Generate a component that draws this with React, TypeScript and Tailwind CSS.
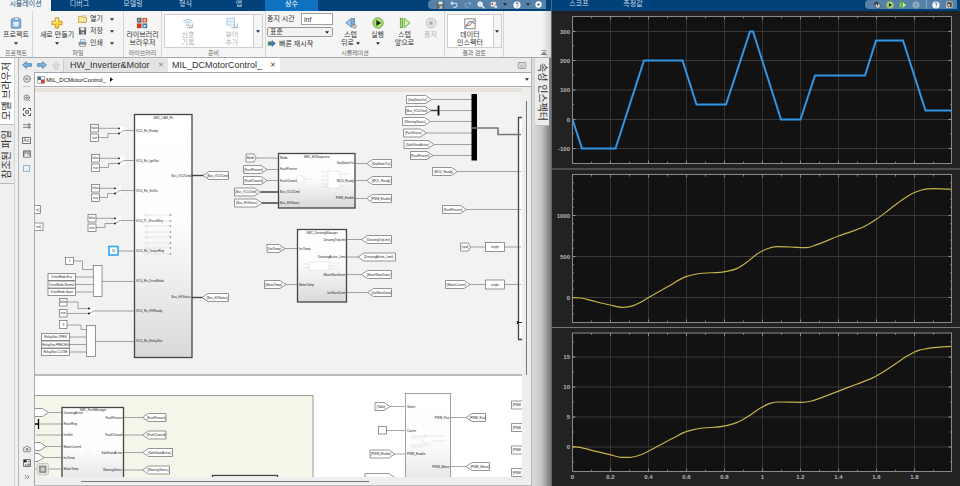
import React from "react";
import { Bookmark, Camera, ChevronsRight, CircleArrowLeft, Keyboard, ZoomIn } from "lucide-react";

const KR = "font-['Noto_Sans','Noto_Sans_CJK_KR',sans-serif]";

/* ---------- icons ---------- */

function Caret({ dim = false }: { dim?: boolean }) {
  return (
    <svg viewBox="0 0 6 4" className={dim ? "h-[3px] w-1 text-gray-400" : "h-[3px] w-1 text-gray-800"}>
      <path d="M0 0h6L3 4z" fill="currentColor" />
    </svg>
  );
}

const icon = "h-3 w-3";

const ProjectIcon = () => (
  <svg viewBox="0 0 14 14" className={icon}>
    <rect x="1.5" y="2" width="11" height="11" rx="1" fill="#7fb2dd" stroke="#5d88b0" />
    <rect x="5" y="0.5" width="5" height="3" fill="#dfeefa" stroke="#7a99b4" strokeWidth=".7" />
    <path d="M4 6h6v5H4z" fill="#d9ebf9" />
    <path d="M4 6h6v1.4H4z" fill="#fff" />
  </svg>
);
const PlusIcon = () => (
  <svg viewBox="0 0 14 14" className={icon}>
    <path d="M5 1h4v4h4v4H9v4H5V9H1V5h4z" fill="#fbd23c" stroke="#c9871d" strokeWidth=".9" />
    <path d="M6 2h2v4H6zM2 6h4v1H2z" fill="#fff3a8" />
  </svg>
);
const FolderIcon = () => (
  <svg viewBox="0 0 10 9" className="h-2 w-[9px]">
    <path d="M.6 1.5h3.2l1 1h4.6v5.8H.6z" fill="#fbe7a0" stroke="#b98a2b" strokeWidth=".8" />
    <path d="M5 .6h3.6v1.6H5z" fill="#fff" stroke="#b98a2b" strokeWidth=".5" />
  </svg>
);
const SaveIcon = () => (
  <svg viewBox="0 0 10 10" className="h-2 w-[9px]">
    <path d="M.5.5h9v9h-9z" fill="#59636c" />
    <path d="M2.4.8h5.2v3.4H2.4z" fill="#e9edf0" />
    <path d="M3 6h4v3.5H3z" fill="#cfd4d8" />
    <path d="M3.6 6.5h1.1v2.4H3.6z" fill="#444" />
  </svg>
);
const PrintIcon = () => (
  <svg viewBox="0 0 10 9" className="h-2 w-[9px]">
    <path d="M2.8.5h5v3h-5z" fill="#d9edfb" stroke="#6f93ad" strokeWidth=".6" />
    <path d="M.6 3.4h8.8v3.8H.6z" fill="#8296a5" />
    <path d="M2 5.8h6v2.6H2z" fill="#eef4f8" stroke="#67798a" strokeWidth=".6" />
  </svg>
);
const LibraryIcon = () => (
  <svg viewBox="0 0 14 14" className={icon}>
    <rect x="1" y="1" width="5.5" height="5.5" fill="#57626d" />
    <path d="M2 5.500l1.400-3 1.400 1.600" stroke="#fff" strokeWidth=".7" fill="none" />
    <rect x="7.500" y="1" width="5.500" height="5.500" fill="#d8532b" />
    <path d="M9 2h2.500v3.500H9z" fill="#f2b29d" />
    <rect x="1" y="7.500" width="5.500" height="5.500" fill="#c93e1c" />
    <rect x="7.500" y="7.500" width="5.500" height="5.500" fill="#3f7db5" />
    <path d="M9 9l3 1.500L9 12z" fill="#fff" />
  </svg>
);
const SignalLogIcon = () => (
  <svg viewBox="0 0 14 14" className={icon}>
    <g fill="none" stroke="#a4c8e4" strokeWidth="1.200">
      <path d="M1.500 5a7 7 0 0 1 10 0M3.200 7a4.700 4.700 0 0 1 6.600 0" />
      <circle cx="6.500" cy="9" r="1.200" />
    </g>
    <path d="M6 12.500h6V7.500M9.500 9v3" stroke="#9b9b9b" fill="none" />
  </svg>
);
const ViewerIcon = () => (
  <svg viewBox="0 0 14 14" className={icon}>
    <rect x="1" y="1.500" width="9" height="8" fill="#eaf4fb" stroke="#a4c8e4" />
    <path d="M2 7l2.500-3L6.500 7 9 4" stroke="#b5cfe2" fill="none" />
    <path d="M6 12.500h7V7.500M10 9v3" stroke="#9b9b9b" fill="none" />
  </svg>
);
const StepBackIcon = () => (
  <svg viewBox="0 0 14 14" className={icon}>
    <path d="M7.500 1.500v10.500L1 6.800z" fill="#9cc9ec" stroke="#4b7dab" strokeWidth=".9" />
    <rect x="9" y="1.500" width="2.200" height="8" fill="#7ab0db" stroke="#4b7dab" strokeWidth=".7" />
    <circle cx="11" cy="11" r="2" fill="#ddd" stroke="#777" />
  </svg>
);
const RunIcon = ({ className = icon }: { className?: string }) => (
  <svg viewBox="0 0 14 14" className={className}>
    <circle cx="7" cy="7" r="6.300" fill="#8ed04a" stroke="#a6a6a6" />
    <circle cx="7" cy="7" r="4.300" fill="#aee36c" />
    <path d="M5 3.600v6.800L10.600 7z" fill="#16301a" />
  </svg>
);
const StepForwardIcon = ({ className = icon }: { className?: string }) => (
  <svg viewBox="0 0 14 14" className={className}>
    <rect x="1.500" y="1.500" width="2.500" height="11" fill="#a5df6a" stroke="#57a02f" strokeWidth=".9" />
    <path d="M6 1.500v11L12.800 7z" fill="#d6f3b4" stroke="#57a02f" />
  </svg>
);
const StopIcon = ({ className = icon }: { className?: string }) => (
  <svg viewBox="0 0 14 14" className={className}>
    <circle cx="7" cy="7" r="6" fill="#e4e4e4" stroke="#c6c6c6" />
    <circle cx="7" cy="7" r="4.300" fill="#f2f2f2" stroke="#cfcfcf" />
    <path d="M5 5h4v4H5z" fill="#a8a8a8" />
  </svg>
);
const InspectorIcon = () => (
  <svg viewBox="0 0 14 14" className={icon}>
    <rect x="1" y="1" width="12" height="11.500" fill="#fff" stroke="#777" />
    <path d="M1.500 10.500C4 10 4.500 4 7 4s3 2 5.500 2.500" stroke="#2f7fc2" strokeWidth="1.200" fill="none" />
    <path d="M2 8c3 0 3 2 5 0s3-5 5.500-5" stroke="#dd7034" strokeWidth="1.200" fill="none" />
  </svg>
);
const FastRestartIcon = () => (
  <svg viewBox="0 0 10 8" className="h-[7px] w-[9px]">
    <path d="M.5 1.500h4v5h-4z" fill="#7ebc62" />
    <path d="M2 2.500h3.500V.6L9.500 4 5.500 7.400V5.500H2z" fill="#3b7eb0" stroke="#24506f" strokeWidth=".5" />
  </svg>
);
const ArrowIcon = ({ flip = false }: { flip?: boolean }) => (
  <svg viewBox="0 0 10 8" className={flip ? "h-2 w-[10px] rotate-180" : "h-2 w-[10px]"}>
    <path d="M.6 4L4.400.7v2h5v2.600h-5v2z" fill="#7db5e0" stroke="#3f7cab" strokeWidth=".8" />
  </svg>
);
const UpIcon = () => (
  <svg viewBox="0 0 8 9" className="h-[9px] w-2">
    <path d="M4 .6L7.500 4.500H5.600v4H2.400v-4H.5z" fill="#ddd" stroke="#c4c4c4" strokeWidth=".7" />
  </svg>
);
const ModelIcon = () => (
  <svg viewBox="0 0 9 9" className="h-2 w-2">
    <rect x=".5" y=".5" width="8" height="8" fill="#f5f5f5" stroke="#888" strokeWidth=".7" />
    <path d="M1 1h3.500v3.500H1z" fill="#3d6fa3" />
    <path d="M4.500 4h4v4h-4z" fill="#c8452a" />
  </svg>
);
const UndoIcon = ({ flip = false }: { flip?: boolean }) => (
  <svg viewBox="0 0 10 9" className={flip ? "h-[7px] w-2 -scale-x-100 opacity-40" : "h-[7px] w-2"}>
    <path d="M1 3h5.500a2.300 2.300 0 0 1 0 5H4M3.500.7L1 3l2.500 2.300" fill="none" stroke="#d5e6f5" strokeWidth="1.300" />
  </svg>
);
const SearchIcon = () => (
  <svg viewBox="0 0 10 10" className="h-2 w-2">
    <path d="M6 6l3.200 3.200" stroke="#d9e7f2" strokeWidth="1.800" />
    <circle cx="4" cy="4" r="3" fill="#cfe7fa" stroke="#fff" />
  </svg>
);
const LayoutIcon = () => (
  <svg viewBox="0 0 10 10" className="h-2 w-2">
    <path d="M1 1h6v6H1z" fill="#f3f3f3" />
    <path d="M2 2h2v3H2z" fill="#c5472a" />
    <path d="M5.500 5.500h3.500V9H5.500z" fill="#f5f5f5" stroke="#777" strokeWidth=".6" />
  </svg>
);
const HelpIcon = () => (
  <svg viewBox="0 0 10 10" className="h-2 w-2">
    <circle cx="5" cy="5" r="4.500" fill="#fff" />
    <path d="M3.600 3.800c0-2 3-1.900 2.900-.2C6.400 4.600 5 4.700 5 6M5 7v1.200" fill="none" stroke="#2b5f8f" strokeWidth="1.100" />
  </svg>
);
const MoreIcon = () => (
  <svg viewBox="0 0 10 10" className="h-[7px] w-[7px]">
    <circle cx="5" cy="5" r="4.500" fill="#fff" />
    <path d="M2.500 4h5L5 7z" fill="#1d4f80" />
  </svg>
);
const PanIcon = () => (
  <svg viewBox="0 0 10 10" className="h-2 w-2">
    <circle cx="6" cy="6" r="3.200" fill="#ccd4da" stroke="#444" />
    <path d="M1 4l4-3 1 5" fill="none" stroke="#222" strokeWidth="1.200" />
  </svg>
);
const PopoutIcon = () => (
  <svg viewBox="0 0 10 10" className="h-2 w-2">
    <path d="M2 1h7v7H2z" fill="#4b4b43" stroke="#d8d3bc" />
    <path d="M1 9l4-4M3 4.500h2.500V7" stroke="#f5f0d8" fill="none" />
  </svg>
);

/* ---------- ribbon ---------- */

function Group({ title, className, children }: { title: string; className: string; children: React.ReactNode }) {
  return (
    <section className={`flex shrink-0 flex-col border-r border-[#d5d5d5] ${className}`}>
      <div className="flex h-[38px] justify-center pt-[2px]">{children}</div>
      <h2 className="text-center text-[6px] leading-[8px] text-[#666]">{title}</h2>
    </section>
  );
}

function BigButton({
  img, lines, caret = false, dim = false, className = "",
}: { img: React.ReactNode; lines: string[]; caret?: boolean; dim?: boolean; className?: string }) {
  return (
    <button
      type="button"
      disabled={dim}
      className={`flex flex-col items-center pt-[2px] text-[7px] leading-[8px] whitespace-nowrap ${dim ? "text-[#b4b4b4]" : "text-[#333]"} ${className}`}
    >
      <span className="flex h-4 items-center">{img}</span>
      {lines.map((l, i) => (
        <span key={l} className="flex items-center gap-[2px]">
          {l}
          {caret && lines.length > 1 && i === lines.length - 1 && <Caret />}
        </span>
      ))}
      {caret && lines.length === 1 && <span className="flex h-2 items-center"><Caret /></span>}
    </button>
  );
}

function FileRow({ img, label }: { img: React.ReactNode; label: string }) {
  return (
    <button type="button" className="flex h-3 w-9 items-center gap-[3px] text-[7px] leading-[8px] whitespace-nowrap text-[#333]">
      {img}
      <span className="flex-1 text-left">{label}</span>
      <Caret />
    </button>
  );
}

function Ribbon() {
  return (
    <div className="flex h-[47px] border-b border-[#a9a9a9] bg-[#f5f5f5]">
      <Group title="프로젝트" className="w-[33px]">
        <BigButton img={<ProjectIcon />} lines={["프로젝트"]} caret />
      </Group>
      <Group title="파일" className="w-[91px]">
        <BigButton img={<PlusIcon />} lines={["새로 만들기"]} caret />
        <div className="ml-1 flex w-[38px] flex-col">
          <FileRow img={<FolderIcon />} label="열기" />
          <FileRow img={<SaveIcon />} label="저장" />
          <FileRow img={<PrintIcon />} label="인쇄" />
        </div>
      </Group>
      <Group title="라이브러리" className="w-[38px]">
        <BigButton img={<LibraryIcon />} lines={["라이브러리", "브라우저"]} />
      </Group>
      <Group title="준비" className="w-[104px]">
        <div className="mt-[1px] flex h-[34px] border border-[#cfcfcf] bg-white">
          <BigButton img={<SignalLogIcon />} lines={["신호", "기록"]} dim className="-mt-[2px] w-[46px]" />
          <BigButton img={<ViewerIcon />} lines={["뷰어", "추가"]} dim className="-mt-[2px] w-[42px]" />
          <button type="button" aria-label="준비 갤러리" className="flex w-[9px] items-center justify-center border-l border-[#cfcfcf] bg-[#f5f5f5]">
            <Caret />
          </button>
        </div>
      </Group>
      <Group title="시뮬레이션" className="w-[179px]">
        <div className="mr-1 flex w-[66px] flex-col text-[7px] leading-[8px] text-[#333]">
          <div className="flex h-[12px] items-center justify-between">
            <label htmlFor="stop" className="whitespace-nowrap">중지 시간</label>
            <input id="stop" defaultValue="inf" className="h-3 w-8 border border-[#a0a0a0] bg-white px-[2px] text-[7px] leading-[8px]" />
          </div>
          <div className="relative mt-[2px]">
            <select aria-label="시뮬레이션 모드" className="block h-[10px] w-full appearance-none rounded-[2px] border border-[#999] bg-[#f3f3f3] pl-[2px] text-[7px] leading-[8px]">
              <option>표준</option>
            </select>
            <span className="pointer-events-none absolute inset-y-0 right-1 flex items-center"><Caret /></span>
          </div>
          <button type="button" className="mt-[1px] flex h-3 items-center gap-[3px] whitespace-nowrap">
            <FastRestartIcon />빠른 재시작
          </button>
        </div>
        <BigButton img={<StepBackIcon />} lines={["스텝", "뒤로"]} caret className="w-[27px]" />
        <BigButton img={<RunIcon />} lines={["실행"]} caret className="w-[27px]" />
        <BigButton img={<StepForwardIcon />} lines={["스텝", "앞으로"]} className="w-[27px]" />
        <BigButton img={<StopIcon />} lines={["중지"]} dim className="w-[25px]" />
      </Group>
      <Group title="결과 검토" className="w-[59px]">
        <div className="mt-[1px] flex h-[34px] border border-[#cfcfcf] bg-white">
          <BigButton img={<InspectorIcon />} lines={["데이터", "인스펙터"]} className="-mt-[1px] w-[45px]" />
          <button type="button" aria-label="결과 갤러리" className="flex w-2 items-center justify-center border-l border-[#cfcfcf] bg-[#f5f5f5]">
            <Caret />
          </button>
        </div>
      </Group>
      <div className="flex flex-1 items-end justify-end bg-linear-to-r from-[#f5f5f5] from-80% to-[#d0d0d0] pr-1 pb-[2px]">
        <button type="button" aria-label="툴스트립 최소화">
          <svg viewBox="0 0 6 5" className="h-[5px] w-[6px]">
            <path d="M0 .5h6M3 1.500L6 5H0z" stroke="#777" strokeWidth=".6" fill="#888" />
          </svg>
        </button>
      </div>
    </div>
  );
}

function QuickBar({ className, children }: { className: string; children: React.ReactNode }) {
  return (
    <div className={`ml-auto flex h-[9px] items-center justify-between rounded-l-[4px] bg-[#5581a8] pr-1 pl-2 ${className}`}>
      {children}
    </div>
  );
}

function TopTabs() {
  const tab = "h-full shrink-0 text-center text-[7px] leading-[7px]";
  return (
    <nav className="flex h-[11px] bg-[#00417a] text-[#c9dcec]">
      <button type="button" className={`${tab} w-[51px] bg-[#f5f5f5] text-[#1f4e79]`}><span className="block h-[11px]">시뮬레이션</span></button>
      <button type="button" className={`${tab} w-[57px]`}><span className="block h-[11px]">디버그</span></button>
      <button type="button" className={`${tab} w-[50px]`}><span className="block h-[11px]">모델링</span></button>
      <button type="button" className={`${tab} w-[55px]`}><span className="block h-[11px]">형식</span></button>
      <button type="button" className={`${tab} w-[52px]`}><span className="block h-[11px]">앱</span></button>
      <button type="button" className={`${tab} w-[53px] bg-[#0f72c0] text-white`}><span className="block h-[11px]">상수</span></button>
      <QuickBar className="mr-[5px] w-[118px]">
        <SaveIcon /><UndoIcon /><UndoIcon flip /><SearchIcon /><LayoutIcon /><Caret /><HelpIcon /><Caret /><MoreIcon />
      </QuickBar>
    </nav>
  );
}

/* ---------- block diagram ---------- */

const INK = "#6a6a6a";

function T({ x, y, a = "start", children }: { x: number; y: number; a?: "start" | "middle" | "end"; children: string }) {
  return <text x={x} y={y + 1} textAnchor={a} fontSize="3" fill="#222">{children}</text>;
}

function Line({ d, w = 0.6 }: { d: string; w?: number }) {
  return <path d={d} fill="none" stroke={w > 1 ? "#444" : INK} strokeWidth={w} />;
}

/* Tag pointing right, wired to `to` */
function From({ x1, x2, y, to, text, w }: { x1: number; x2: number; y: number; to?: number; text: string; w?: number }) {
  const tip = x2 - x1 < 12 ? 2 : 6;
  return (
    <g>
      {to !== undefined && <Line d={`M${x2} ${y}H${to}`} w={w} />}
      <path d={`M${x1} ${y - 4}H${x2 - tip}L${x2} ${y}L${x2 - tip} ${y + 4}H${x1}Z`} fill="#fff" stroke={INK} strokeWidth=".7" />
      <T x={(x1 + x2 - tip / 2) / 2} y={y} a="middle">{text}</T>
    </g>
  );
}

/* Tag pointing left, wired from `from` */
function Goto({ x1, x2, y, from, text, w }: { x1: number; x2: number; y: number; from: number; text: string; w?: number }) {
  return (
    <g>
      <Line d={`M${from} ${y}H${x1}`} w={w} />
      <path d={`M${x2} ${y - 4}H${x1 + 6}L${x1} ${y}L${x1 + 6} ${y + 4}H${x2}Z`} fill="#fff" stroke={INK} strokeWidth=".7" />
      <T x={(x1 + x2 + 4) / 2} y={y} a="middle">{text}</T>
    </g>
  );
}

function Box({ x, y, w, h, text = "" }: { x: number; y: number; w: number; h: number; text?: string }) {
  return (
    <g>
      <rect x={x} y={y} width={w} height={h} fill="#fff" stroke={INK} strokeWidth=".7" />
      <T x={x + w / 2} y={y + h / 2} a="middle">{text}</T>
    </g>
  );
}

function Sub({ x, y, w, h, title, light = false, ins, outs }: {
  x: number; y: number; w: number; h: number; title: string; light?: boolean; ins: [number, string][]; outs: [number, string][];
}) {
  return (
    <g>
      <rect x={x} y={y} width={w} height={h} fill="url(#shade)" stroke={light ? "#888" : "#444"} strokeWidth={light ? 0.8 : 1.3} />
      <T x={x + w / 2} y={y + 3} a="middle">{title}</T>
      {ins.map(([py, t]) => <T key={t} x={x + 1.500} y={py}>{t}</T>)}
      {outs.map(([py, t]) => <T key={t} x={x + w - 1} y={py} a="end">{t}</T>)}
    </g>
  );
}

function SwitchRow({ x, y, mid, c, top, bottom }: { x: number; y: number; mid: number; c: number; top: string; bottom: string }) {
  return (
    <g>
      <Box x={x} y={y - 6} w={8} h={7.500} text={top} />
      <Box x={x} y={y + 3.500} w={8} h={7.500} text={bottom} />
      <Line d={`M${x + 8} ${y - 2.200}H${c}`} />
      <Line d={`M${x + 8} ${y + 7}H${mid}V${y + 3}H${c}`} />
      <rect x={c} y={y - 4} width="6" height="8" fill="#fff" />
      <Line d={`M${c} ${y + 3}L${c + 5} ${y}H134`} />
      <circle cx={c} cy={y - 2.200} r=".9" fill="#111" />
      <circle cx={c} cy={y + 3} r=".9" fill="#111" />
    </g>
  );
}

const thumbRows = [215, 221, 226, 232, 237, 243, 248, 254];

function Diagram() {
  return (
    <svg viewBox="35 92 487 385" className="block w-full" fontFamily="Liberation Sans, Noto Sans CJK KR, sans-serif" role="img" aria-label="MIL_DCMotorControl_">
      <defs>
        <linearGradient id="shade" x1="0" y1="0" x2="0" y2="1">
          <stop offset="0" stopColor="#fff" />
          <stop offset=".45" stopColor="#fdfdfd" />
          <stop offset="1" stopColor="#d9d9d9" />
        </linearGradient>
      </defs>
      <rect x="35" y="92" width="487" height="284" fill="#f2f2f2" />
      <rect x="35" y="376" width="487" height="102" fill="#fff" />
      <path d="M35 375h487" stroke="#aaa" strokeWidth="1.500" />
      <rect x="30" y="395.500" width="283" height="90" fill="#f2f7e9" stroke="#999" />

      {/* CAN receive */}
      <Sub x={134.500} y={114.500} w={57.500} h={243} title="SMC_CAN_Rx"
        ins={[[130.500, "VCU_Rx_Ready"], [160.500, "VCU_Rx_IgnStat"], [190.500, "VCU_Rx_SrvDn"], [220.500, "VCU_Rx_ResetReq"], [250.500, "VCU_Rx_TorqueReq"], [280.700, "VCU_Rx_DriveMode"], [311, "VCU_Rx_HVReady"], [341, "VCU_Rx_RelayStat"]]}
        outs={[[175.500, "Bus_VCUCmd"], [297, "Bus_HVStatus"]]} />
      {thumbRows.map((y) => (
        <g key={y}>
          <path d={`M148.500 ${y}H170`} stroke="#ccc" strokeWidth=".5" />
          <ellipse cx="146.500" cy={y} rx="2" ry="1" fill="#fff" stroke="#bbb" strokeWidth=".4" />
          <circle cx="170.500" cy={y} r=".8" fill="#777" />
        </g>
      ))}
      <Goto x1={203} x2={228.500} y={175.500} from={192} text="{Bus_VCUCmd}" w={1.400} />
      <Goto x1={202} x2={228.500} y={297.500} from={192} text="{Bus_HVStatus}" w={1.400} />
      <SwitchRow x={90.500} y={130.500} mid={108} c={119} top="false" bottom="true" />
      <SwitchRow x={91.500} y={160.500} mid={108.500} c={119} top="false" bottom="true" />
      <SwitchRow x={91.500} y={190.500} mid={107.500} c={115} top="false" bottom="true" />
      <SwitchRow x={88} y={220.500} mid={105} c={115} top="false" bottom="true" />
      <Line d="M118 251H134" />
      <rect x="109" y="246.500" width="9" height="8.500" fill="#fff" stroke="#2da5ef" strokeWidth="1.600" />
      <T x={113.500} y={250.700} a="middle">10</T>

      <Box x={65.500} y={257.500} w={8} h={7} text="1" />
      <Line d="M73.500 261H82.500V269.500H93" />
      {["DriveMode.Eco", "DriveMode.Normal", "DriveMode.Sport"].map((t, i) => (
        <g key={t}><Box x={48} y={273.500 + i * 7.500} w={27.500} h={7} text={t} /><Line d={`M75.500 ${277 + i * 7.500}H93`} /></g>
      ))}
      <Box x={93.300} y={265.500} w={8.700} h={31} />
      <Line d="M102 281.500H134" />

      <Box x={59.300} y={298.500} w={7.700} h={7.500} text="false" />
      <Box x={59.300} y={309.500} w={7.700} h={7.500} text="true" />
      <Line d="M67 302H78V308.500H89" />
      <rect x="89" y="307" width="6" height="8" fill="#fff" />
      <Line d="M67 313.500H89L94 311H134" />
      <circle cx="89" cy="308.500" r=".9" /><circle cx="89" cy="313.500" r=".9" />

      <Box x={59.500} y={320.500} w={7.500} h={8} text="3" />
      <Line d="M67 325H81V329.500H86.500" />
      {["RelayStat.OPEN", "RelayStat.PRECHG", "RelayStat.CLOSE"].map((t, i) => (
        <g key={t}><Box x={41.500} y={333.500 + i * 7.500} w={28} h={7} text={t} /><Line d={`M69.500 ${337 + i * 7.500}H86.500`} /></g>
      ))}
      <Box x={86.500} y={325.500} w={9} h={31} />
      <Line d="M95.500 341.500H134" />
      <Box x={30} y={205.500} w={10.500} h={8} />
      <T x={36} y={209.500}>{"rx}"}</T>
      <Box x={30} y={223} w={13} h={7.500} />
      <T x={36} y={226.500}>{"ent}"}</T>

      {/* HV sequence */}
      <From x1={246} x2={256} y={158} to={278} text="Mode" />
      <From x1={243.500} x2={267} y={169.500} to={278} text="{FaultPresent}" />
      <From x1={243.500} x2={267} y={180.500} to={278} text="{FaultCleared}" />
      <From x1={234.500} x2={260.500} y={192} to={278} text="{Bus_VCUCmd}" w={1.500} />
      <From x1={234.500} x2={262} y={203} to={278} text="{Bus_HVStatus}" w={1.500} />
      <Sub x={278.500} y={153.500} w={76.500} h={54.500} title="SMC_HVSequence"
        ins={[[158, "Mode"], [169, "FaultPresent"], [180.500, "FaultCleared"], [192, "Bus_VCUCmd"], [203, "Bus_HVStatus"]]}
        outs={[[163, "SeqStateOut"], [198, "PWM_Enable"]]} />
      <g fill="#fff" stroke="#d6d6d6" strokeWidth=".5">
        <path d="M321 172h7M321 176h7M321 180h7M321 184h7M321 187h7M340 174h8M340 186h6M292 179h5M304 179h8" />
        <rect x="328" y="171" width="12" height="17" /><rect x="297" y="176" width="7" height="6" />
      </g>
      <T x={354} y={180.500} a="end">MCU_Ready</T>
      <Goto x1={366.500} x2={391.500} y={163.500} from={355} text="{SeqStateOut}" />
      <Goto x1={366.500} x2={391.500} y={180.500} from={355} text="{MCU_Ready}" />
      <Goto x1={366.500} x2={391.500} y={198.500} from={355} text="{PWM_Enable}" />

      {/* Derating */}
      <From x1={267} x2={285} y={248.500} to={297} text="{InvTemp}" />
      <From x1={264.500} x2={286} y={284.500} to={297} text="{MotorTemp}" />
      <Sub x={297.500} y={229.500} w={49} h={72.500} title="SMC_DeratingManager"
        ins={[[248.500, "InvTemp"], [284.500, "MotorTemp"]]}
        outs={[[239.500, "DeratingTrqLimit"], [257, "DeratingActive_Limit"], [274.500, "MotorWarnDone"], [292.500, "InvWarnDone"]]} />
      <g fill="#fff" stroke="#d6d6d6" strokeWidth=".5">
        <path d="M303 264h6M303 268h6M329 263h11M329 266h11M329 269h9" /><rect x="309" y="262" width="20" height="8.500" />
      </g>
      <Goto x1={361.500} x2={391.500} y={239.500} from={346.500} text="{DeratingTrqLimit}" />
      <Goto x1={358} x2={395.500} y={257} from={346.500} text="{DeratingActive_Limit}" />
      <Goto x1={361.500} x2={391.500} y={274.500} from={346.500} text="{MotorWarnDone}" />
      <Goto x1={367.500} x2={391.500} y={292.500} from={346.500} text="{InvWarnDone}" />

      {/* Status bus */}
      <From x1={406.500} x2={431.500} y={99.500} to={472} text="{SeqStateOut}" />
      <From x1={405.500} x2={431} y={110.500} to={472} text="{Bus_VCUCmd}" />
      <Line d="M431 110.500H438.500" w={1.500} />
      <path d="M438.500 105.500v10" stroke="#000" strokeWidth="1.800" />
      <From x1={402.500} x2={430.500} y={121.500} to={472} text="{WarningStatus}" />
      <From x1={403.500} x2={426.500} y={133} to={472} text="{FaultStatus}" />
      <From x1={404} x2={434} y={144.500} to={472} text="{SafeStateActive}" />
      <From x1={410.500} x2={433} y={155.500} to={472} text="{FaultPresent}" />
      <path d="M471.500 94h5.500v66.500h-5.500z" />
      <path d="M522 117.500h-3.500v222H522" fill="#fff" stroke="#444" strokeWidth="1.300" />
      <path d="M472 128H498V134.500H521" fill="none" stroke="#777" strokeWidth="1.600" />
      <From x1={432.500} x2={457.500} y={171.500} to={521} text="{MCU_Ready}" />
      <From x1={442.500} x2={466.500} y={209.500} to={521} text="{FaultPresent}" />
      <From x1={460.500} x2={470.500} y={247} to={521} text="{spd}" />
      <From x1={445.500} x2={470} y={284.500} to={521} text="{MotorCurrent}" />
      <Box x={485.500} y={242.500} w={19} h={9} text="single" />
      <Box x={485.500} y={280} w={19} h={9} text="single" />
      <path d="M517.500 321v3M518 322.500h4" stroke="#222" />

      {/* Fault manager */}
      <From x1={20} x2={48.500} y={412.500} to={62} text="" />
      <Line d="M38.500 424H62M36 435H62" />
      <path d="M38.500 419v10M35 424h3" stroke="#000" strokeWidth="1.300" />
      <From x1={20} x2={46} y={446.500} to={62} text="" />
      <From x1={20} x2={44} y={457.500} to={62} text="" />
      <Line d="M35 469H62" />
      <Sub x={62} y={407.500} w={61.500} h={90} title="" 
        ins={[[412.500, "DeratingActive"], [424, "ResetReq"], [435, "InvVolt"], [446.500, "MotorCurrent"], [457.500, "InvTemp"], [469, "MotorTemp"]]}
        outs={[[417.500, "FaultPresent"], [435, "FaultCleared"], [452.500, "SafeStateActive"], [470, "WarningStatus"]]} />
      <T x={93} y={410} a="middle">SMC_FaultManager</T>
      <path d="M80 448h6v6h-6zM93 449h5v5h-5z" fill="#fff" opacity=".8" />
      <Goto x1={142.500} x2={166} y={417.500} from={123.500} text="{FaultPresent}" />
      <Goto x1={142.500} x2={166} y={435} from={123.500} text="{FaultCleared}" />
      <Goto x1={142.500} x2={172.500} y={452.500} from={123.500} text="{SafeStateActive}" />
      <Goto x1={142.500} x2={169.500} y={470} from={123.500} text="{WarningStatus}" />
      <Sub x={212.500} y={475.500} w={65} h={20} title="" ins={[]} outs={[]} />
      <rect x="37" y="463.500" width="11.500" height="11.500" rx="1.500" fill="#e4e6de" stroke="#bbb" strokeWidth=".7" />
      <rect x="39.500" y="466" width="6.500" height="6.500" fill="#9a9a9a" stroke="#777" strokeWidth=".6" />
      <path d="M41 467.500h3.500v3.500H41z" fill="#ccc" />

      {/* PWM */}
      <From x1={375} x2={390} y={406.500} to={405} text="{Table}" />
      <Box x={378.500} y={426.500} w={8} h={7.500} />
      <Line d="M386.500 430.500H405" />
      <From x1={370} x2={395} y={454} to={405} text="{PWM_Enable}" />
      <From x1={365} x2={395} y={477.500} text="" />
      <Sub x={405.500} y={393.500} w={45} h={110} title="" light
        ins={[[406.500, "Select"], [430.500, "Carrier"], [454, "PWM_Enable"]]} outs={[[417.500, "PWM_Flux"], [466.500, "PWM_Mmux"]]} />
      <g fill="none" stroke="#cfcfcf" strokeWidth=".5">
        <path d="M411 436h34M411 438h8M422 437v6h8M432 441h14M411 445h22M411 447h12M425 435v3" />
      </g>
      <Goto x1={466} x2={485.500} y={417.500} from={450.500} text="{PWM_Flux}" />
      <Goto x1={466} x2={489.500} y={466.500} from={450.500} text="{PWM_Mmux}" />
      {[405, 427.500, 450, 472.500].map((y) => (
        <g key={y}><path d={`M530 ${y - 4}H511.500v8H530`} fill="#fff" stroke={INK} strokeWidth=".7" /><T x={512.500} y={y}>{"{PWM"}</T></g>
      ))}
    </svg>
  );
}

/* ---------- editor ---------- */

function SideTab({ label, active = false, cw = false, className }: { label: string; active?: boolean; cw?: boolean; className: string }) {
  return (
    <button
      type="button"
      className={`flex items-center justify-center border-b border-[#bbb] text-[10px] leading-[14px] whitespace-nowrap text-[#333] ${active ? "bg-white" : "bg-[#ececec]"} ${className}`}
    >
      <span className={cw ? "[text-orientation:sideways] [writing-mode:vertical-rl]" : "rotate-180 [text-orientation:sideways] [writing-mode:vertical-rl]"}>
        {label}
      </span>
    </button>
  );
}

function ToolButton({ label, children }: { label: string; children: React.ReactNode }) {
  return <button type="button" aria-label={label} className="flex h-[14px] w-full items-center justify-center text-[#555]">{children}</button>;
}

function Palette() {
  const s = "h-2 w-2";
  return (
    <div className="flex flex-1 flex-col">
      <ToolButton label="탐색기 숨기기"><CircleArrowLeft className={s} /></ToolButton>
      <div className="mx-1 mb-[4px] border-b border-[#c5c5c5]" />
      <ToolButton label="확대"><ZoomIn className={s} /></ToolButton>
      <ToolButton label="화면에 맞춤">
        <svg viewBox="0 0 9 9" className={s} fill="none" stroke="currentColor"><path d="M.5 3V.5H3M6 .5h2.500V3M8.500 6v2.500H6M3 8.500H.5V6" strokeWidth="1.200" /><path d="M3 3h3v3H3z" /></svg>
      </ToolButton>
      <ToolButton label="신호">
        <svg viewBox="0 0 9 7" className={s} fill="none" stroke="currentColor"><path d="M0 2h8M0 5h8M6 .5L8.500 2 6 3.500M6 3.800L8.500 5 6 6.500" strokeWidth=".8" /></svg>
      </ToolButton>
      <ToolButton label="주석"><span className="border border-[#777] bg-white text-[5px] leading-[5px]">A≡</span></ToolButton>
      <ToolButton label="이미지">
        <svg viewBox="0 0 9 8" className={s}><path d="M.5.5h8v7h-8z" fill="#aaa" stroke="#666" /><path d="M1 7l2.500-4L5.500 6l1-1L8 7z" fill="#eee" /></svg>
      </ToolButton>
      <ToolButton label="영역"><span className="h-[7px] w-[7px] border border-[#9cb4cc] bg-[#e6f0fa]" /></ToolButton>
      <div className="flex-1" />
      <div className="pb-[2px]">
        <ToolButton label="스냅샷"><Camera className={s} /></ToolButton>
        <ToolButton label="북마크">
          <svg viewBox="0 0 9 9" className={s}><path d="M.5.5h8v8h-8z" fill="#f4f4f4" stroke="#666" /><path d="M1 1h3v3.500L2.500 3.500 1 4.500z" fill="#222" /><path d="M5 5h2.500v2.500H5zM2 6h2v1.500H2zM5.500 2h2v1.500h-2z" fill="#777" /></svg>
        </ToolButton>
        <ToolButton label="더 보기"><ChevronsRight className={s} /></ToolButton>
      </div>
    </div>
  );
}

function Editor() {
  return (
    <div className="flex flex-1 bg-[#f0f0f0]">
      <div className="flex w-[15px] shrink-0 flex-col border-r border-[#d5d5d5]">
        <SideTab label="모델 브라우저" active className="h-[67px]" />
        <SideTab label="참조된 파일" className="h-[59px]" />
      </div>
      <div className="ml-[3px] flex min-w-0 flex-1 flex-col border-r border-l border-[#b5b5b8]">
        <div className="flex h-[14px] items-center bg-[#ececec]">
          <div className="flex w-[44px] items-center justify-around">
            <button type="button" aria-label="뒤로"><ArrowIcon /></button>
            <button type="button" aria-label="앞으로"><ArrowIcon flip /></button>
            <button type="button" aria-label="상위로"><UpIcon /></button>
          </div>
          <div className="flex h-[13px] w-[105px] items-center justify-between border-l border-[#ccc] bg-[#e4e4e4] pr-[4px] pl-[6px] text-[9px] leading-[12px] text-[#333]">
            <button type="button">HW_Inverter&amp;Motor</button><button type="button" aria-label="HW 닫기" className="text-[7px] text-[#888]">✕</button>
          </div>
          <div className="flex h-[14px] w-[112px] items-center justify-between bg-white pr-[4px] pl-[4px] text-[9px] leading-[12px] text-[#333]">
            <button type="button">MIL_DCMotorControl_</button><button type="button" aria-label="MIL 닫기" className="text-[7px] text-[#444]">✕</button>
          </div>
          <Keyboard className="mr-1 ml-auto h-[9px] w-[10px] text-[#888]" />
        </div>
        <div className="flex flex-1">
          <div className="flex w-4 shrink-0 border-r border-[#aaa]"><Palette /></div>
          <div className="flex min-w-0 flex-1 flex-col">
            <div className="flex h-[15px] items-center border-y border-[#a8a8b4] bg-white px-[2px] text-[6px] leading-[8px] text-[#111]">
              <ModelIcon />
              <span className="ml-[1px]">MIL_DCMotorControl_</span>
              <svg viewBox="0 0 4 6" className="ml-1 h-[5px] w-[3px]"><path d="M0 0l4 3-4 3z" /></svg>
              <span className="ml-auto"><Caret /></span>
            </div>
            <div className="flex flex-1">
              <div className="min-w-0 flex-1">
                <div className="h-[5px] border-t border-[#f2f2f2] bg-[#e7e3dc]" />
                <Diagram />
              </div>
              <div className="flex w-[9px] justify-center bg-[#eee] pt-[14px]"><div className="h-[274px] w-[1px] bg-[#777]" /></div>
            </div>
            <div className="flex h-2 items-center bg-[#eee] pl-[46px]"><div className="h-[1px] w-[64%] bg-[#777]" /></div>
            <div className="h-[1px] bg-[#bbb]" />
          </div>
        </div>
      </div>
      <div className="w-[19px] shrink-0 bg-linear-to-r from-[#dcdcdc] via-[#c6c6c6] to-[#777] pr-[1px] pl-[3px]">
        <SideTab label="속성 인스펙터" cw className="h-[68px] w-[14px]" />
      </div>
    </div>
  );
}

/* ---------- scopes ---------- */

type Pt = [number, number];

const speed: Pt[] = [[572.5, 119.5], [582, 148.5], [615.5, 148.5], [644, 60.5], [682.5, 60.5], [696.5, 104.5], [726, 104.5], [750, 31.5], [753, 31.5], [781, 119.5], [800.5, 119.5], [815, 75.5], [865, 75.5], [876, 40.5], [903, 40.5], [925.5, 110.5], [951, 110.5]];

const scaled = (pts: Pt[], oy: number): Pt[] => pts.map(([x, y]) => [550 + x / 3, oy + y / 3]);

const angle = scaled([[66, 398], [92, 399], [125, 407], [180, 420], [220, 427], [250, 422], [272, 412], [297, 397], [350, 367], [408, 335], [440, 327], [530, 319], [560, 311], [590, 292], [620, 268], [650, 252], [682, 245], [720, 246], [770, 248], [800, 239], [865, 213], [950, 181], [980, 162], [1020, 132], [1060, 102], [1090, 84], [1115, 75], [1203, 72]], 165);
const turns = scaled([[66, 380], [90, 382], [125, 391], [180, 404], [215, 412], [240, 412], [270, 405], [320, 380], [370, 354], [408, 335], [440, 327], [530, 317], [560, 308], [595, 289], [630, 265], [660, 250], [690, 246], [755, 247], [785, 243], [830, 227], [900, 200], [950, 181], [975, 170], [1030, 136], [1075, 106], [1105, 91], [1130, 86], [1203, 79]], 320);

/* Cubic segments whose slope at a sample weighs in both neighbouring intervals; flat at extrema */
function smooth(p: Pt[]) {
  const n = p.length;
  const h = p.slice(1).map((q, i) => q[0] - p[i][0]);
  const s = p.slice(1).map((q, i) => (q[1] - p[i][1]) / h[i]);
  const m = p.map((_, i) => {
    if (i === 0) return s[0];
    if (i === n - 1) return s[n - 2];
    if (s[i - 1] * s[i] <= 0) return 0;
    return (s[i - 1] * h[i] + s[i] * h[i - 1]) / (h[i - 1] + h[i]);
  });
  let d = `M${p[0][0]} ${p[0][1]}`;
  for (let i = 0; i < n - 1; i++) {
    const t = h[i] / 3;
    d += `C${p[i][0] + t} ${p[i][1] + m[i] * t} ${p[i + 1][0] - t} ${p[i + 1][1] - m[i + 1] * t} ${p[i + 1][0]} ${p[i + 1][1]}`;
  }
  return d;
}

function Plot({ view, top, bottom, ys, step, path, color, width, xLabels = false, label }: {
  view: string; top: number; bottom: number; ys: [number, string][]; step: number; path: string; color: string; width: number; xLabels?: boolean; label: string;
}) {
  const L = 572.5;
  const R = 951.5;
  const zero = ys[ys.length - 1][0];
  const minor: number[] = [];
  for (let y = zero; y > top + 1; y -= step) minor.push(y);
  for (let y = zero + step; y < bottom - 1; y += step) minor.push(y);
  const xs = Array.from({ length: 19 }, (_, i) => L + 19 * (i + 1));
  return (
    <svg viewBox={view} className="block w-full" role="img" aria-label={label} fontFamily="Liberation Sans, sans-serif" fontSize="6" fontWeight="bold" fill="#b8b8b8">
      <rect x={L} y={top} width={R - L} height={bottom - top} fill="#121212" />
      {xs.map((x, i) => (
        <g key={x}>
          {i % 2 === 1 && <path d={`M${x} ${top}V${bottom}`} stroke="#343434" />}
          <path d={`M${x} ${top}v${i % 2 ? 3 : 2}M${x} ${bottom}v${i % 2 ? -3 : -2}`} stroke="#aaa" strokeWidth=".7" />
        </g>
      ))}
      {minor.map((y) => <path key={y} d={`M${L} ${y}h1.500M${R} ${y}h-1.500`} stroke="#aaa" strokeWidth=".7" />)}
      {ys.map(([y, t]) => (
        <g key={t}>
          <path d={`M${L} ${y}H${R}`} stroke="#3a3a3a" />
          <path d={`M${L} ${y}h3M${R} ${y}h-3`} stroke="#aaa" strokeWidth=".8" />
          <text x="570" y={y + 2} textAnchor="end">{t}</text>
        </g>
      ))}
      <rect x={L} y={top} width={R - L} height={bottom - top} fill="none" stroke="#8a8a8a" />
      <path d={path} fill="none" stroke={color} strokeWidth={width} />
      {xLabels && ["0", "0.2", "0.4", "0.6", "0.8", "1", "1.2", "1.4", "1.6", "1.8"].map((t, i) => (
        <text key={t} x={L + 38 * i} y="479" textAnchor="middle">{t}</text>
      ))}
    </svg>
  );
}

function ScopePanel() {
  return (
    <main className="flex flex-col border-l border-[#666] bg-[#222]">
      <nav className="flex h-[11px] bg-[#00417a] text-[7px] leading-[7px] text-[#c9dcec]">
        <button type="button" className="w-[54px]"><span className="block h-[11px]">스코프</span></button>
        <button type="button" className="w-[54px]"><span className="block h-[11px]">측정값</span></button>
        <QuickBar className="mr-[3px] w-[92px]">
          <PanIcon /><RunIcon className="h-2 w-2" /><StepForwardIcon className="h-2 w-2" />
          <span className="opacity-40"><StopIcon className="h-2 w-2" /></span>
          <span className="h-[9px] w-[1px] bg-[#86a7c4]" /><HelpIcon /><PopoutIcon />
        </QuickBar>
      </nav>
      <div className="border-b-2 border-[#4c4c4c]">
        <Plot label="속도" view="552 11 408 157" top={16.5} bottom={163.5} step={14.7} path={"M" + speed.map((p) => p.join(" ")).join("L")} color="#2f96e8" width={2}
          ys={[[31.5, "300"], [60.5, "200"], [90, "100"], [119.5, "0"], [148.5, "-100"]]} />
      </div>
      <div className="border-b border-[#777]">
        <Plot label="각도" view="552 170 408 157" top={174.5} bottom={322.5} step={8.2} path={smooth(angle)} color="#c4b24a" width={1.2}
          ys={[[215.5, "1000"], [256.5, "500"], [297.5, "0"]]} />
      </div>
      <Plot label="회전" view="552 328 408 158" top={333} bottom={471.5} step={15} path={smooth(turns)} color="#c4b24a" width={1.2} xLabels
        ys={[[357, "15"], [387, "10"], [417, "5"], [447, "0"]]} />
    </main>
  );
}

export default function App() {
  return (
    <div className={`grid min-h-screen grid-cols-[551fr_409fr] overflow-hidden bg-[#222] ${KR}`}>
      <div className="flex min-w-0 flex-col font-['Liberation_Sans','Noto_Sans_CJK_KR',sans-serif]">
        <TopTabs />
        <Ribbon />
        <Editor />
      </div>
      <ScopePanel />
    </div>
  );
}
